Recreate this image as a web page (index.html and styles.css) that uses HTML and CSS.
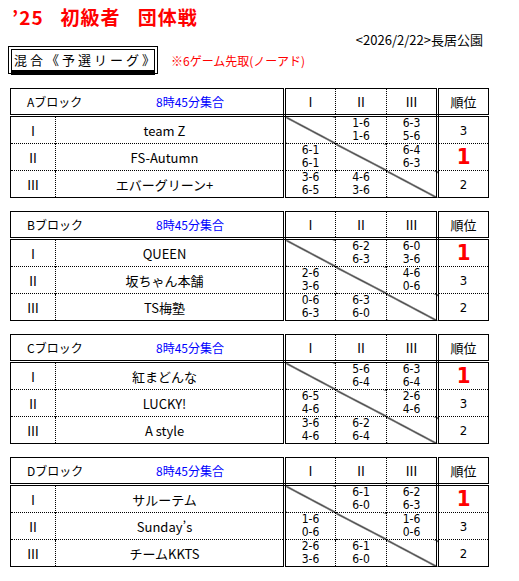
FILE: index.html
```html
<!DOCTYPE html>
<html lang="ja">
<head>
    <meta charset="UTF-8">
    <meta name="viewport" content="width=device-width, initial-scale=1.0">
    <title>'25 初級者 団体戦</title>
    <link rel="stylesheet" href="styles.css">
</head>
<body>

    <div class="page">
        <h1 class="title"><span>’25</span><span>初級者</span><span>団体戦</span></h1>
        <p class="date">&lt;2026/2/22&gt;長居公園</p>

        <div class="league">
            <div class="league-box">混合《予選リーグ》</div>
            <span class="note">※6ゲーム先取(ノーアド)</span>
        </div>

        <!-- A block -->
        <table class="block">
            <colgroup>
                <col class="c-no"><col class="c-name"><col class="c-set"><col class="c-set"><col class="c-set"><col class="c-rank">
            </colgroup>
            <thead>
                <tr>
                    <th colspan="2" class="block-head"><span class="block-name">Aブロック</span><span class="meet">8時45分集合</span></th>
                    <th class="set">Ⅰ</th><th class="set">Ⅱ</th><th class="set last">Ⅲ</th><th class="rank">順位</th>
                </tr>
            </thead>
            <tbody>
                <tr>
                    <td class="no">Ⅰ</td><td class="name">team Z</td>
                    <td class="score diag"></td><td class="score">1-6<br>1-6</td><td class="score last">6-3<br>5-6</td>
                    <td class="rank">3</td>
                </tr>
                <tr>
                    <td class="no">Ⅱ</td><td class="name">FS-Autumn</td>
                    <td class="score">6-1<br>6-1</td><td class="score diag"></td><td class="score last">6-4<br>6-3</td>
                    <td class="rank"><span class="top">1</span></td>
                </tr>
                <tr>
                    <td class="no">Ⅲ</td><td class="name">エバーグリーン+</td>
                    <td class="score">3-6<br>6-5</td><td class="score">4-6<br>3-6</td><td class="score last diag"></td>
                    <td class="rank">2</td>
                </tr>
            </tbody>
        </table>

        <!-- B block -->
        <table class="block">
            <colgroup>
                <col class="c-no"><col class="c-name"><col class="c-set"><col class="c-set"><col class="c-set"><col class="c-rank">
            </colgroup>
            <thead>
                <tr>
                    <th colspan="2" class="block-head"><span class="block-name">Bブロック</span><span class="meet">8時45分集合</span></th>
                    <th class="set">Ⅰ</th><th class="set">Ⅱ</th><th class="set last">Ⅲ</th><th class="rank">順位</th>
                </tr>
            </thead>
            <tbody>
                <tr>
                    <td class="no">Ⅰ</td><td class="name">QUEEN</td>
                    <td class="score diag"></td><td class="score">6-2<br>6-3</td><td class="score last">6-0<br>3-6</td>
                    <td class="rank"><span class="top">1</span></td>
                </tr>
                <tr>
                    <td class="no">Ⅱ</td><td class="name">坂ちゃん本舗</td>
                    <td class="score">2-6<br>3-6</td><td class="score diag"></td><td class="score last">4-6<br>0-6</td>
                    <td class="rank">3</td>
                </tr>
                <tr>
                    <td class="no">Ⅲ</td><td class="name">TS梅塾</td>
                    <td class="score">0-6<br>6-3</td><td class="score">6-3<br>6-0</td><td class="score last diag"></td>
                    <td class="rank">2</td>
                </tr>
            </tbody>
        </table>

        <!-- C block -->
        <table class="block">
            <colgroup>
                <col class="c-no"><col class="c-name"><col class="c-set"><col class="c-set"><col class="c-set"><col class="c-rank">
            </colgroup>
            <thead>
                <tr>
                    <th colspan="2" class="block-head"><span class="block-name">Cブロック</span><span class="meet">8時45分集合</span></th>
                    <th class="set">Ⅰ</th><th class="set">Ⅱ</th><th class="set last">Ⅲ</th><th class="rank">順位</th>
                </tr>
            </thead>
            <tbody>
                <tr>
                    <td class="no">Ⅰ</td><td class="name">紅まどんな</td>
                    <td class="score diag"></td><td class="score">5-6<br>6-4</td><td class="score last">6-3<br>6-4</td>
                    <td class="rank"><span class="top">1</span></td>
                </tr>
                <tr>
                    <td class="no">Ⅱ</td><td class="name">LUCKY!</td>
                    <td class="score">6-5<br>4-6</td><td class="score diag"></td><td class="score last">2-6<br>4-6</td>
                    <td class="rank">3</td>
                </tr>
                <tr>
                    <td class="no">Ⅲ</td><td class="name">A style</td>
                    <td class="score">3-6<br>4-6</td><td class="score">6-2<br>6-4</td><td class="score last diag"></td>
                    <td class="rank">2</td>
                </tr>
            </tbody>
        </table>

        <!-- D block -->
        <table class="block">
            <colgroup>
                <col class="c-no"><col class="c-name"><col class="c-set"><col class="c-set"><col class="c-set"><col class="c-rank">
            </colgroup>
            <thead>
                <tr>
                    <th colspan="2" class="block-head"><span class="block-name">Dブロック</span><span class="meet">8時45分集合</span></th>
                    <th class="set">Ⅰ</th><th class="set">Ⅱ</th><th class="set last">Ⅲ</th><th class="rank">順位</th>
                </tr>
            </thead>
            <tbody>
                <tr>
                    <td class="no">Ⅰ</td><td class="name">サルーテム</td>
                    <td class="score diag"></td><td class="score">6-1<br>6-0</td><td class="score last">6-2<br>6-3</td>
                    <td class="rank"><span class="top">1</span></td>
                </tr>
                <tr>
                    <td class="no">Ⅱ</td><td class="name">Sunday’s</td>
                    <td class="score">1-6<br>0-6</td><td class="score diag"></td><td class="score last">1-6<br>0-6</td>
                    <td class="rank">3</td>
                </tr>
                <tr>
                    <td class="no">Ⅲ</td><td class="name">チームKKTS</td>
                    <td class="score">2-6<br>3-6</td><td class="score">6-1<br>6-0</td><td class="score last diag"></td>
                    <td class="rank">2</td>
                </tr>
            </tbody>
        </table>
    </div>

</body>
</html>
```

FILE: styles.css
```css
* {
    margin: 0;
    padding: 0;
    box-sizing: border-box;
}

body {
    font-family: "Noto Sans CJK JP", sans-serif;
    font-size: 13px;
    color: #000;
    background: #fff;
}

.page {
    padding: 6px 0 0 10px;
    width: 488px;
}

/* Heading */
.title {
    color: #ff0000;
    font-size: 19px;
    font-weight: bold;
    line-height: 22px;
    letter-spacing: 1px;
    display: flex;
    gap: 17px;
    margin-left: 2px;
}

.date {
    text-align: right;
    font-size: 13px;
    line-height: 14px;
    margin-top: 5px;
    padding-right: 5px;
}

.league {
    display: flex;
    align-items: center;
    margin: -1px 0 14px -2px;
}

.league-box {
    border: 1px solid #000;
    outline: 1px solid #000;
    outline-offset: 2px;
    box-shadow: 0 4px 0 #000;
    margin: 3px;
    width: 144px;
    height: 22px;
    font-size: 13px;
    line-height: 20px;
    letter-spacing: 3px;
    padding-left: 2px;
    white-space: nowrap;
}

.note {
    color: #ff0000;
    font-size: 12px;
    margin-left: 13px;
}

/* Block tables */
.block {
    border-collapse: collapse;
    table-layout: fixed;
    width: 478px;
    border: 1px solid #000;
    margin-bottom: 13px;
}

.c-no { width: 45px; }
.c-name { width: 229px; }
.c-set { width: 51px; }
.c-rank { width: 51px; }

.block th {
    font-weight: normal;
    height: 27px;
    border-bottom: 3px double #000;
    text-align: center;
}

.block td {
    height: 27px;
    border-top: 1px dotted #000;
    text-align: center;
    vertical-align: middle;
}

.block-head {
    text-align: left !important;
    font-size: 12px;
    border-right: 3px double #000;
}

.block-name {
    display: inline-block;
    width: 145px;
    padding-left: 16px;
}

.meet {
    color: #0000ff;
}

.set {
    border-right: 1px dotted #000;
}

.block .last {
    border-right: 3px double #000;
}

.no {
    border-right: 1px dotted #000;
}

.name {
    border-right: 3px double #000;
    padding-right: 10px;
}

.score {
    font-family: "DejaVu Sans Condensed", "DejaVu Sans", sans-serif;
    font-size: 12px;
    line-height: 13px;
    border-right: 1px dotted #000;
}

.diag {
    background: linear-gradient(to top right,
        transparent calc(50% - 0.9px),
        #000 calc(50% - 0.3px),
        #000 calc(50% + 0.3px),
        transparent calc(50% + 0.9px));
}

.rank {
    font-family: "DejaVu Sans Condensed", "DejaVu Sans", sans-serif;
}

th.rank {
    font-family: "Noto Sans CJK JP", sans-serif;
}

.top {
    color: #ff0000;
    font-size: 22px;
    line-height: 22px;
    font-weight: bold;
}
```
